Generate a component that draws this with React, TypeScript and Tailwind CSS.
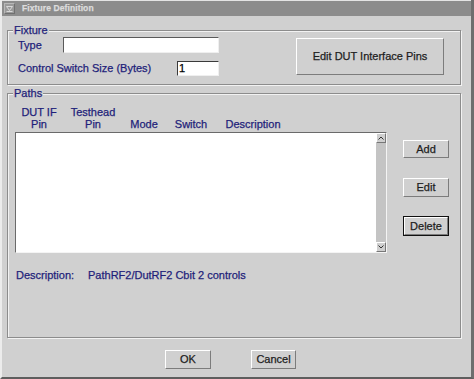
import React from "react";

const font = "font-['Liberation_Sans',Arial,sans-serif]";

const Raised = ({ label, className }: { label: string; className: string }) => (
    <button
        className={`flex items-center justify-center bg-[#d0d0d0] border border-t-white border-l-white border-b-[#7c7c7c] border-r-[#7c7c7c] text-[11px] text-[#1e1e1e] leading-none ${className}`}
    >
        {label}
    </button>
);

const ScrollArrow = ({ up }: { up: boolean }) => (
    <div className="w-[10px] h-[10px] flex items-center justify-center bg-[#cfcfcf] border border-t-white border-l-white border-b-[#777] border-r-[#777]">
        <svg width="6" height="4" viewBox="0 0 6 4">
            {up ? (
                <path d="M0.5 3.5 L3 1 L5.5 3.5" fill="none" stroke="#333" strokeWidth="1" />
            ) : (
                <path d="M0.5 0.5 L3 3 L5.5 0.5" fill="none" stroke="#333" strokeWidth="1" />
            )}
        </svg>
    </div>
);

export default function App() {
    const headers = [
        { top: "DUT IF", bottom: "Pin", w: "w-[48px]" },
        { top: "Testhead", bottom: "Pin", w: "w-[60px]" },
        { top: "", bottom: "Mode", w: "w-[42px]" },
        { top: "", bottom: "Switch", w: "w-[52px]" },
        { top: "", bottom: "Description", w: "w-[72px]" },
    ];

    return (
        <div className={`w-[474px] h-[379px] flex flex-col bg-[#d0d0d0] border-l-2 border-l-[#ececec] border-r-[3px] border-r-[#6e6e6e] border-b-2 border-b-[#5e5e5e] [-webkit-text-stroke:0.25px_currentColor] ${font}`}>
            {/* title bar */}
            <div className="h-[16px] shrink-0 flex items-center bg-[#8c8c8c] border-t border-t-[#e4e4e4]">
                <div className="ml-[2px] w-[11px] h-[11px] flex items-center justify-center bg-[#9a9a9a] border border-t-[#b8b8b8] border-l-[#b8b8b8] border-b-[#707070] border-r-[#707070]">
                    <svg width="7" height="6" viewBox="0 0 7 6">
                        <path d="M0.5 0.5 H6.5 L3.5 4.5 Z" fill="none" stroke="#d8d8d8" strokeWidth="1" />
                        <path d="M0.5 5.5 H6.5" stroke="#d8d8d8" strokeWidth="1" />
                    </svg>
                </div>
                <span className="ml-[7px] text-[8.5px] font-bold text-[#dcdcdc] tracking-[0.1px]">Fixture Definition</span>
            </div>

            <div className="flex flex-col pl-[5px]">
                {/* Fixture */}
                <fieldset className="mt-[8px] w-[454px] border border-[#8c8c8c] shadow-[inset_1px_1px_0_#f2f2f2,1px_1px_0_#f2f2f2]">
                    <legend className="ml-[5px] px-[1px] bg-[#d0d0d0] text-[11px] leading-[13px] text-[#1f1f7a]">Fixture</legend>
                    <div className="flex items-start pl-[10px] pr-[16px] pb-[8px]">
                        <div className="flex flex-col">
                            <div className="flex items-center h-[16px]">
                                <span className="w-[45px] text-[11px] text-[#1f1f7a]">Type</span>
                                <input className="w-[156px] h-[16px] bg-white border border-t-[#5a5a5a] border-l-[#5a5a5a] border-b-[#efefef] border-r-[#efefef] outline-none" />
                            </div>
                            <div className="flex items-center h-[15px] mt-[8px]">
                                <span className="w-[159px] text-[11px] text-[#1f1f7a]">Control Switch Size (Bytes)</span>
                                <div className="w-[42px] h-[15px] bg-white border border-t-[#3a3a3a] border-l-[#3a3a3a] border-b-[#efefef] border-r-[#efefef] text-[11px] leading-[13px] pl-[1px] text-black">1</div>
                            </div>
                        </div>
                        <Raised label="Edit DUT Interface Pins" className="ml-auto mt-[1px] w-[148px] h-[37px]" />
                    </div>
                </fieldset>

                {/* Paths */}
                <fieldset className="mt-[2px] w-[454px] h-[251px] border border-[#8c8c8c] shadow-[inset_1px_1px_0_#f2f2f2,1px_1px_0_#f2f2f2]">
                    <legend className="ml-[5px] px-[1px] bg-[#d0d0d0] text-[11px] leading-[13px] text-[#1f1f7a]">Paths</legend>
                    <div className="flex flex-col pl-[7px]">
                        <div className="flex items-end mt-[6px]">
                            {headers.map((h, i) => (
                                <div key={i} className={`${h.w} flex flex-col items-center text-[11px] leading-[12px] text-[#1f1f7a]`}>
                                    {h.top && <span>{h.top}</span>}
                                    <span>{h.bottom}</span>
                                </div>
                            ))}
                        </div>
                        <div className="flex mt-[2px]">
                            <div className="w-[372px] h-[121px] flex bg-white border border-t-[#6a6a6a] border-l-[#6a6a6a] border-b-[#f4f4f4] border-r-[#f4f4f4]">
                                <div className="flex-1" />
                                <div className="w-[10px] flex flex-col justify-between bg-[#c4c4c4]">
                                    <ScrollArrow up />
                                    <ScrollArrow up={false} />
                                </div>
                            </div>
                            <div className="ml-[16px] flex flex-col">
                                <Raised label="Add" className="mt-[8px] w-[46px] h-[18px]" />
                                <Raised label="Edit" className="mt-[20px] w-[46px] h-[19px]" />
                                <div className="mt-[19px] border border-[#111]">
                                    <Raised label="Delete" className="w-[44px] h-[18px]" />
                                </div>
                            </div>
                        </div>
                        <div className="flex mt-[14px] text-[11px] text-[#1f1f7a]">
                            <span className="ml-[1px] w-[72px]">Description:</span>
                            <span>PathRF2/DutRF2 Cbit 2 controls</span>
                        </div>
                    </div>
                </fieldset>

                <div className="flex mt-[12px] pl-[158px] gap-[40px]">
                    <Raised label="OK" className="w-[46px] h-[19px]" />
                    <Raised label="Cancel" className="w-[45px] h-[19px]" />
                </div>
            </div>
        </div>
    );
}
